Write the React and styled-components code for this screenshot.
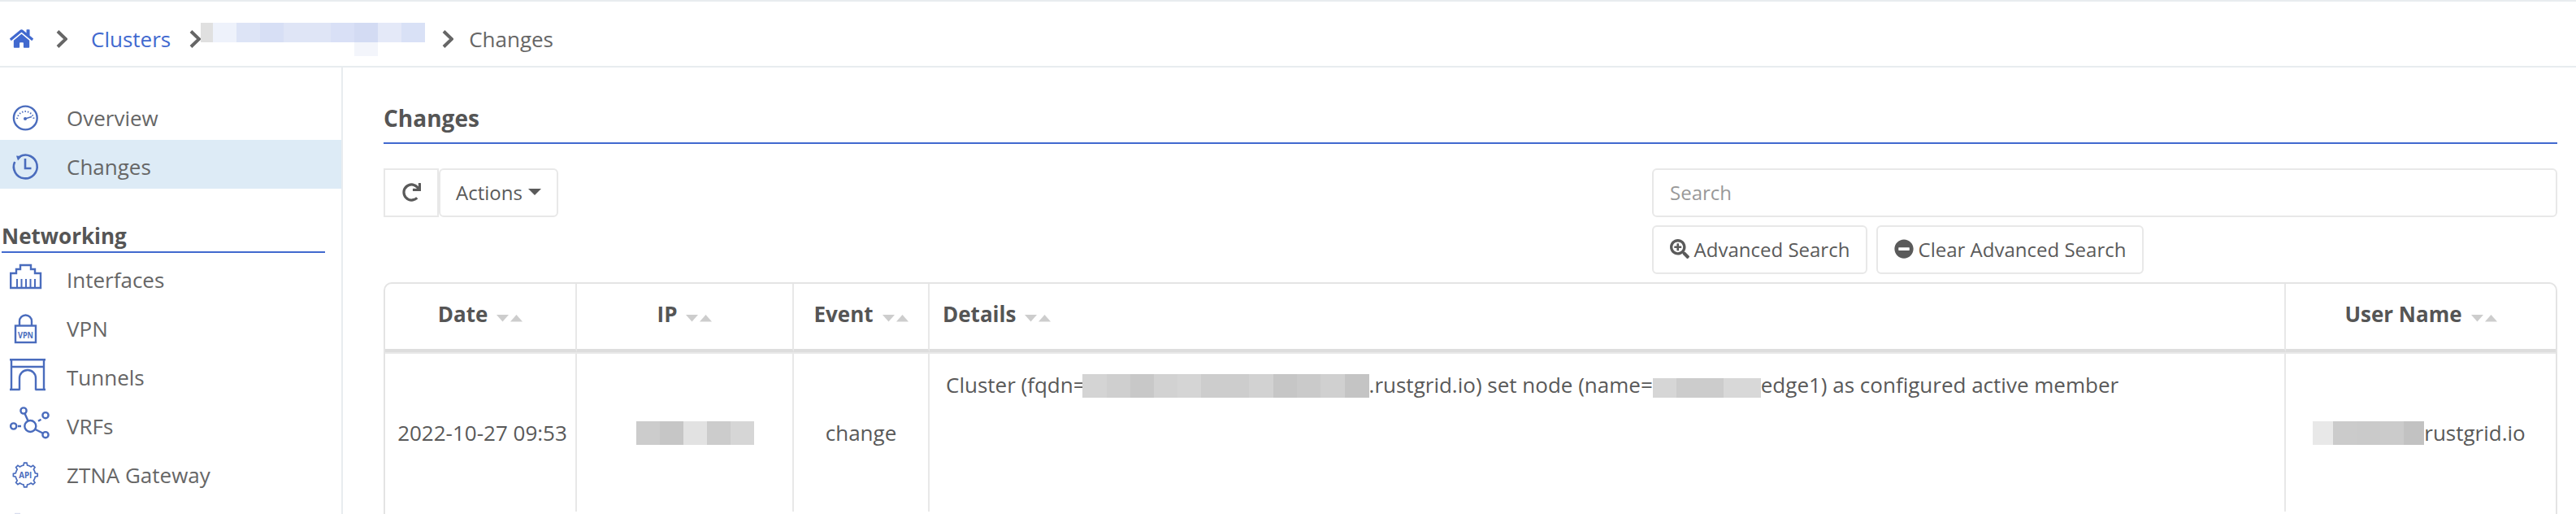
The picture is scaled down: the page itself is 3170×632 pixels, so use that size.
import React from "react";
import styled, { createGlobalStyle } from "styled-components";
import { FaHome, FaRedo, FaSearchPlus, FaMinusCircle } from "react-icons/fa";

const BLUE = "#4169cf";
const ICON = "#4a6cbd";

const Global = createGlobalStyle`
  html, body { margin: 0; padding: 0; height: 632px; overflow: hidden; background: #fff; }
  body { font-family: "Open Sans", "Liberation Sans", sans-serif; color: #666; }
  * { box-sizing: border-box; }
`;

const Page = styled.div`
  display: flex;
  flex-direction: column;
  height: 632px;
  overflow: hidden;
  border-top: 2px solid #e8ecef;
`;

const Breadcrumbs = styled.nav`
  flex: none;
  display: flex;
  align-items: center;
  height: 81px;
  padding: 12px 0 0 12px;
  border-bottom: 2px solid #e8ecef;
  font-size: 26px;
`;
const HomeLink = styled.a`
  display: flex;
  color: ${BLUE};
  font-size: 29px;
  margin-top: -1px;
`;
const CrumbLink = styled.a`
  color: ${BLUE};
`;
const CrumbText = styled.span`
  color: #666;
  margin-left: 19px;
`;
const Chevron = styled.svg`
  flex: none;
  width: 14px;
  height: 22px;
  margin: 0 ${(p) => p.$after}px 0 ${(p) => p.$before}px;
  fill: none;
  stroke: #666;
  stroke-width: 4;
`;
const CrumbRedaction = styled.span`
  display: inline-flex;
  align-items: flex-start;
  height: 24px;
  align-self: flex-start;
  margin-top: 14px;
`;

const Pixel = styled.span`
  flex: none;
  display: block;
  width: ${(p) => p.$w}px;
  height: ${(p) => p.$h}px;
  background: ${(p) =>
    p.$tail ? `linear-gradient(${p.$c} 24px, ${p.$tail} 24px)` : p.$c};
`;
const InlineRedaction = styled.span`
  display: inline-flex;
  vertical-align: ${(p) => p.$v}px;
  margin-left: ${(p) => p.$offset || 0}px;
`;

const Body = styled.div`
  flex: 1;
  display: flex;
  min-height: 0;
`;

const Sidebar = styled.aside`
  flex: none;
  width: 422px;
  padding-top: 29px;
  border-right: 2px solid #e8ecef;
`;
const NavRow = styled.a`
  display: flex;
  align-items: center;
  height: 60px;
  font-size: 26px;
  color: #666;
  background: ${(p) => (p.$active ? "#ddebf6" : "transparent")};
`;
const NavLabel = styled.span`
  margin-top: ${(p) => p.$nudge}px;
`;
const NavIcon = styled.svg`
  flex: none;
  width: 82px;
  height: 60px;
  fill: none;
  stroke: ${ICON};
  stroke-width: 2.4;
`;
const SectionTitle = styled.h3`
  margin: 48px 20px 4px 2px;
  padding: 0 0 9px;
  height: 31px;
  line-height: 20px;
  font-size: 26px;
  font-weight: 700;
  color: #555;
  border-bottom: 2px solid ${BLUE};
`;

const Main = styled.main`
  flex: 1;
  min-width: 0;
  padding: 0 23px 0 50px;
`;
const PageTitle = styled.h2`
  margin: 41px 0 30px;
  height: 53px;
  font-size: 28px;
  line-height: 42px;
  font-weight: 700;
  color: #555;
  border-bottom: 2px solid ${BLUE};
`;
const Toolbar = styled.div`
  display: flex;
  justify-content: space-between;
  align-items: flex-start;
`;
const ButtonGroup = styled.div`
  display: flex;
`;
const Button = styled.button`
  display: flex;
  align-items: center;
  justify-content: center;
  height: 60px;
  padding: 0 0 2px;
  background: #fff;
  border: 2px solid #e8e8e8;
  border-radius: ${(p) => (p.$square ? "0" : "6px")};
  width: ${(p) => p.$w}px;
  margin-left: ${(p) => p.$gap || 0}px;
  color: #5a5a5a;
  font-family: inherit;
  font-size: 24px;
`;
const Caret = styled.span`
  width: 0;
  height: 0;
  margin-left: 7px;
  border-left: 8px solid transparent;
  border-right: 8px solid transparent;
  border-top: 8px solid #5a5a5a;
`;
const SearchColumn = styled.div`
  width: 1114px;
  display: flex;
  flex-direction: column;
  gap: 10px;
`;
const SearchInput = styled.input`
  height: 60px;
  width: 100%;
  padding: 0 20px 2px;
  border: 2px solid #e8e8e8;
  border-radius: 6px;
  font-family: inherit;
  font-size: 24px;
  color: #555;
  outline: none;
  &::placeholder { color: #999; opacity: 1; }
`;
const ButtonIcon = styled.span`
  display: flex;
  font-size: 24px;
  margin-right: 6px;
`;

const TableFrame = styled.div`
  margin-top: 10px;
  height: 400px;
  border: 2px solid #e4e4e4;
  border-radius: 10px;
`;
const Table = styled.table`
  width: 2671px;
  table-layout: fixed;
  border-collapse: separate;
  border-spacing: 0;
`;
const Th = styled.th`
  height: 84px;
  padding: 0 0 7px ${(p) => (p.$left ? "16px" : "0")};
  text-align: ${(p) => (p.$left ? "left" : "center")};
  font-size: 26px;
  font-weight: 700;
  color: #555;
  border-bottom: 4px solid #dddddd;
  border-right: ${(p) => (p.$last ? "0" : "2px solid #e8e8e8")};
`;
const SortIcon = styled.svg`
  display: inline-block;
  width: 32px;
  height: 9px;
  margin-left: 11px;
  vertical-align: 0;
  fill: #cdcdcd;
`;
const Td = styled.td`
  height: 196px;
  padding: 0 ${(p) => (p.$last ? "4px" : "0")} 0 ${(p) => p.$inset || 0}px;
  text-align: center;
  font-size: 26px;
  color: #595959;
  border-top: 2px solid #e8e8e8;
  border-right: ${(p) => (p.$last ? "0" : "2px solid #e8e8e8")};
  vertical-align: middle;
`;
const DetailsTd = styled(Td)`
  text-align: left;
  vertical-align: top;
  padding: 20px 0 0 20px;
  white-space: nowrap;
`;

const Redact = ({ blocks, h, v, offset }) => (
  <InlineRedaction $v={v} $offset={offset}>
    {blocks.map(([w, c], i) => (
      <Pixel key={i} $w={w} $h={h} $c={c} />
    ))}
  </InlineRedaction>
);

const Sort = () => (
  <SortIcon viewBox="0 0 32 9">
    <path d="M0 0H15L7.5 8.5Z" />
    <path d="M17 8.5H32L24.5 0Z" />
  </SortIcon>
);

const gearPath = (() => {
  const cx = 31.3, cy = 29, teeth = 8, ro = 15, ri = 12.2;
  const step = (Math.PI * 2) / teeth;
  let d = "";
  for (let i = 0; i < teeth; i++) {
    const a = i * step - Math.PI / 2;
    const pts = [
      [ri, a - step * 0.5],
      [ri, a - step * 0.24],
      [ro, a - step * 0.14],
      [ro, a + step * 0.14],
      [ri, a + step * 0.24],
    ];
    pts.forEach(([r, t], j) => {
      const x = (cx + r * Math.cos(t)).toFixed(2);
      const y = (cy + r * Math.sin(t)).toFixed(2);
      d += `${i === 0 && j === 0 ? "M" : "L"}${x} ${y}`;
    });
  }
  return d + "Z";
})();

const IconText = styled.text`
  fill: ${ICON};
  stroke: none;
  font-family: "Open Sans", sans-serif;
  font-weight: 700;
  text-anchor: middle;
  font-size: ${(p) => p.$size}px;
`;

const Gauge = () => (
  <NavIcon viewBox="0 0 82 60">
    <circle cx="31.3" cy="33" r="14.4" />
    <path d="M21 34A10.4 10.4 0 0 1 41.6 34" strokeWidth="2" strokeDasharray="1.4 2.1" />
    <circle cx="31" cy="34" r="2" fill={ICON} stroke="none" />
    <path d="M31 34L39 31.6" strokeWidth="1.6" />
  </NavIcon>
);
const ClockHistory = () => (
  <NavIcon viewBox="0 0 82 60">
    <path d="M24.5 20.3A14.4 14.4 0 1 1 18.2 27" strokeWidth="2.6" />
    <path d="M20 19.5L27 20L22 25.5Z" fill={ICON} stroke="none" />
    <path d="M31 23V35H38.5" strokeWidth="2.6" />
  </NavIcon>
);
const Port = () => (
  <NavIcon viewBox="0 0 82 60">
    <path d="M13.2 39V21H20V16H25V11H38V16H43V21H50V39Z" />
    <path d="M21 28V39M26.5 28V39M32 28V39M37.5 28V39M43 28V39" strokeWidth="2" />
  </NavIcon>
);
const Lock = () => (
  <NavIcon viewBox="0 0 82 60">
    <rect x="19" y="25.5" width="25" height="20.5" />
    <path d="M24 25V20A7.5 7.5 0 0 1 39 20V25" />
    <IconText x="31.5" y="40.5" $size="11" textLength="19" lengthAdjust="spacingAndGlyphs">VPN</IconText>
  </NavIcon>
);
const Arch = () => (
  <NavIcon viewBox="0 0 82 60">
    <path d="M12 7.3H56M14 16H54M14 7.3V44M54 7.3V44M12 44H24.5M43.5 44H56" />
    <path d="M24 44.5V30A10 10 0 0 1 44 30V44.5" />
  </NavIcon>
);
const Nodes = () => (
  <NavIcon viewBox="0 0 82 60">
    <circle cx="37.3" cy="29" r="7" />
    <circle cx="29" cy="10" r="3.6" />
    <circle cx="56" cy="15.7" r="3.6" />
    <circle cx="16.7" cy="29" r="3.6" />
    <circle cx="56" cy="39.7" r="3.6" />
    <path d="M30.5 13.5L34.5 22.5M47 22.8L50.5 20.8M22 29H26M43.5 33L52.5 37.5" />
  </NavIcon>
);
const Gear = () => (
  <NavIcon viewBox="0 0 82 60">
    <path d={gearPath} strokeWidth="1.7" />
    <IconText x="31.3" y="33" $size="11" textLength="16" lengthAdjust="spacingAndGlyphs">API</IconText>
  </NavIcon>
);
const NextIcon = () => (
  <NavIcon viewBox="0 0 82 60">
    <path d="M18 17H25" stroke="#d8dcec" />
  </NavIcon>
);

const crumbBlocks = [
  [15, "#e0e0e0"], [29, "#eef2fb"], [29, "#dde4f6"], [29, "#d7dff5"], [29, "#dfe5f6"],
  [29, "#dfe5f6"], [29, "#d9e0f6"], [29, "#d3dbf3", "#f3f5fb"], [29, "#e4e9f8"], [29, "#d9e1f6"],
];
const ipBlocks = [[29, "#cccccc"], [29, "#c6c6c6"], [29, "#e2e2e2"], [29, "#cccccc"], [29, "#d6d6d6"]];
const fqdnBlocks = [
  [30, "#d4d4d4"], [29, "#cfcfcf"], [29, "#c8c8c8"], [29, "#d2d2d2"], [29, "#d5d5d5"], [29, "#cdcdcd"],
  [30, "#cdcdcd"], [30, "#d2d2d2"], [29, "#c6c6c6"], [29, "#cacaca"], [30, "#d0d0d0"], [30, "#c4c4c4"],
];
const nameBlocks = [[29, "#d6d6d6"], [58, "#cccccc"], [46, "#d8d8d8"]];
const userBlocks = [[25, "#e8e8e8"], [29, "#cbcbcb"], [29, "#cacaca"], [29, "#cbcbcb"], [25, "#c2c2c2"]];

const nav = [
  ["Interfaces", Port],
  ["VPN", Lock],
  ["Tunnels", Arch],
  ["VRFs", Nodes],
  ["ZTNA Gateway", Gear],
];

const ChevronIcon = ({ before, after }) => (
  <Chevron viewBox="0 0 14 22" $before={before} $after={after}>
    <path d="M2 1.5L12 11L2 20.5" />
  </Chevron>
);

export default function App() {
  return (
    <Page>
      <Global />
      <Breadcrumbs>
        <HomeLink><FaHome /></HomeLink>
        <ChevronIcon before={28} after={29} />
        <CrumbLink>Clusters</CrumbLink>
        <ChevronIcon before={23} after={0} />
        <CrumbRedaction>
          {crumbBlocks.map(([w, c, tail], i) => (
            <Pixel key={i} $w={w} $h={tail ? 41 : 24} $c={c} $tail={tail} />
          ))}
        </CrumbRedaction>
        <ChevronIcon before={21} after={0} />
        <CrumbText>Changes</CrumbText>
      </Breadcrumbs>
      <Body>
        <Sidebar>
          <NavRow><Gauge /><NavLabel $nudge={6}>Overview</NavLabel></NavRow>
          <NavRow $active><ClockHistory /><NavLabel $nudge={6}>Changes</NavLabel></NavRow>
          <SectionTitle>Networking</SectionTitle>
          {nav.map(([label, Icon]) => (
            <NavRow key={label}><Icon /><NavLabel $nudge={-2}>{label}</NavLabel></NavRow>
          ))}
          <NavRow><NextIcon /></NavRow>
        </Sidebar>
        <Main>
          <PageTitle>Changes</PageTitle>
          <Toolbar>
            <ButtonGroup>
              <Button $square $w={68}><FaRedo size={23} /></Button>
              <Button $w={147}>Actions<Caret /></Button>
            </ButtonGroup>
            <SearchColumn>
              <SearchInput placeholder="Search" />
              <ButtonGroup>
                <Button $w={265}><ButtonIcon><FaSearchPlus /></ButtonIcon>Advanced Search</Button>
                <Button $w={329} $gap={11}><ButtonIcon><FaMinusCircle /></ButtonIcon>Clear Advanced Search</Button>
              </ButtonGroup>
            </SearchColumn>
          </Toolbar>
          <TableFrame>
            <Table>
              <colgroup>
                <col width="236" /><col width="267" /><col width="167" /><col width="1669" /><col width="332" />
              </colgroup>
              <thead>
                <tr>
                  <Th>Date<Sort /></Th>
                  <Th>IP<Sort /></Th>
                  <Th>Event<Sort /></Th>
                  <Th $left>Details<Sort /></Th>
                  <Th $last>User Name<Sort /></Th>
                </tr>
              </thead>
              <tbody>
                <tr>
                  <Td $inset={5}>2022-10-27 09:53</Td>
                  <Td><Redact blocks={ipBlocks} h={29} v={-5} offset={26} /></Td>
                  <Td>change</Td>
                  <DetailsTd>
                    Cluster (fqdn=<Redact blocks={fqdnBlocks} h={29} v={-6} offset={-4} />.rustgrid.io) set node (name=<Redact blocks={nameBlocks} h={24} v={-6} />edge1) as configured active member
                  </DetailsTd>
                  <Td $last><Redact blocks={userBlocks} h={29} v={-5} />rustgrid.io</Td>
                </tr>
              </tbody>
            </Table>
          </TableFrame>
        </Main>
      </Body>
    </Page>
  );
}
